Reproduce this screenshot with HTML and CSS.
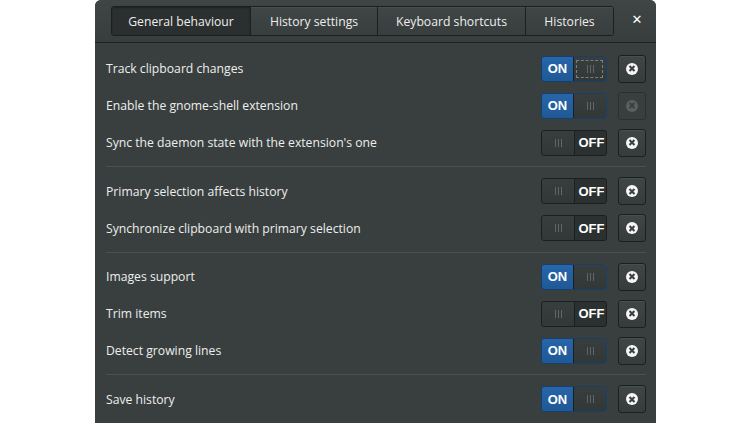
FILE: index.html
```html
<!DOCTYPE html>
<html>
<head>
<meta charset="utf-8">
<link rel="stylesheet" href="styles.css">
</head>
<body>
<div class="window">
  <div class="header">
    <div class="tabs">
      <div class="tab active">General behaviour</div>
      <div class="tab">History settings</div>
      <div class="tab">Keyboard shortcuts</div>
      <div class="tab">Histories</div>
    </div>
    <div class="close">&#x2715;</div>
  </div>
  <div class="content">
    <div class="row">
      <span class="label">Track clipboard changes</span>
      <div class="sw on focus"><span class="state">ON</span><span class="knob"><i></i><i></i><i></i></span></div>
      <div class="reset"><span class="ico"></span></div>
    </div>
    <div class="row">
      <span class="label">Enable the gnome-shell extension</span>
      <div class="sw on"><span class="state">ON</span><span class="knob"><i></i><i></i><i></i></span></div>
      <div class="reset disabled"><span class="ico"></span></div>
    </div>
    <div class="row">
      <span class="label">Sync the daemon state with the extension's one</span>
      <div class="sw off"><span class="knob"><i></i><i></i><i></i></span><span class="state">OFF</span></div>
      <div class="reset"><span class="ico"></span></div>
    </div>
    <div class="sep"></div>
    <div class="row">
      <span class="label">Primary selection affects history</span>
      <div class="sw off"><span class="knob"><i></i><i></i><i></i></span><span class="state">OFF</span></div>
      <div class="reset"><span class="ico"></span></div>
    </div>
    <div class="row">
      <span class="label">Synchronize clipboard with primary selection</span>
      <div class="sw off"><span class="knob"><i></i><i></i><i></i></span><span class="state">OFF</span></div>
      <div class="reset"><span class="ico"></span></div>
    </div>
    <div class="sep"></div>
    <div class="row">
      <span class="label">Images support</span>
      <div class="sw on"><span class="state">ON</span><span class="knob"><i></i><i></i><i></i></span></div>
      <div class="reset"><span class="ico"></span></div>
    </div>
    <div class="row">
      <span class="label">Trim items</span>
      <div class="sw off"><span class="knob"><i></i><i></i><i></i></span><span class="state">OFF</span></div>
      <div class="reset"><span class="ico"></span></div>
    </div>
    <div class="row">
      <span class="label">Detect growing lines</span>
      <div class="sw on"><span class="state">ON</span><span class="knob"><i></i><i></i><i></i></span></div>
      <div class="reset"><span class="ico"></span></div>
    </div>
    <div class="sep"></div>
    <div class="row">
      <span class="label">Save history</span>
      <div class="sw on"><span class="state">ON</span><span class="knob"><i></i><i></i><i></i></span></div>
      <div class="reset"><span class="ico"></span></div>
    </div>
  </div>
</div>
</body>
</html>
```
FILE: styles.css
```css
html, body {
  margin: 0;
  padding: 0;
  background: #ffffff;
  height: 100%;
  overflow: hidden;
}
body {
  display: flex;
  justify-content: flex-start;
  padding-left: 95px;
  font-family: "Open Sans", "Noto Sans", sans-serif;
  font-size: 12.2px;
  color: #eeeeec;
}
.window {
  width: 561px;
  height: 423px;
  background: #393f3f;
  border-radius: 6px 6px 0 0;
  overflow: hidden;
}
.header {
  height: 42px;
  border-bottom: 1px solid #1e2222;
  background: linear-gradient(#3f4545, #383d3d);
  display: flex;
  align-items: flex-start;
}
.tabs {
  margin-top: 6px;
  margin-left: 16px;
  height: 30px;
  display: flex;
  border: 1px solid #1c1f1f;
  border-radius: 3px;
  box-sizing: border-box;
  overflow: hidden;
}
.tab {
  display: flex;
  align-items: center;
  justify-content: center;
  background: linear-gradient(#404646, #383d3d);
  border-left: 1px solid #1c1f1f;
  box-shadow: inset 0 1px rgba(255,255,255,0.05);
}
.tab:nth-child(1) { width: 138px; border-left: 0; }
.tab:nth-child(2) { width: 126px; }
.tab:nth-child(3) { width: 147px; }
.tab:nth-child(4) { width: 87px; }
.tab.active {
  background: #2b2f2f;
  box-shadow: inset 0 1px 2px rgba(0,0,0,0.3);
}
.close {
  margin-left: 15px;
  margin-top: 12px;
  width: 16px;
  text-align: center;
  font-size: 13px;
  font-weight: bold;
  color: #ffffff;
  font-family: "DejaVu Sans", sans-serif;
}
.content {
  padding: 7px 10px 0 11px;
}
.row {
  height: 37px;
  display: flex;
  align-items: center;
}
.label {
  flex: 1;
}
.sep {
  height: 1px;
  background: #4a5050;
  margin: 5px 0 5.5px 0;
}
.sw {
  width: 66px;
  height: 26px;
  box-sizing: border-box;
  border-radius: 3px;
  display: flex;
  font-weight: bold;
  font-family: "Liberation Sans", "Open Sans", sans-serif;
  font-size: 13px;
  color: #ffffff;
  overflow: hidden;
}
.sw.on {
  background: linear-gradient(#2766aa, #1f5896);
  border: 1px solid #173f6b;
}
.sw.off {
  background: #2b3030;
  border: 1px solid #1c1f1f;
}
.state {
  flex: 1;
  display: flex;
  align-items: center;
  justify-content: center;
}
.sw.off .state { padding-left: 2px; }
.knob {
  width: 33px;
  display: flex;
  align-items: center;
  justify-content: center;
  gap: 2px;
  background: linear-gradient(#383d3d, #323737);
  box-sizing: border-box;
}
.sw.on .knob { border-left: 1px solid #1c1f1f; }
.sw.off .knob { border-right: 1px solid #1c1f1f; }
.knob i {
  width: 1px;
  height: 8px;
  background: #60666a;
}
.sw.focus .knob {
  outline: 1px dashed #7a8080;
  outline-offset: -4px;
}
.reset {
  margin-left: 11px;
  width: 28px;
  height: 28px;
  box-sizing: border-box;
  border: 1px solid #1c1f1f;
  border-radius: 3px;
  background: linear-gradient(#404646, #363b3b);
  box-shadow: inset 0 1px rgba(255,255,255,0.05);
  display: flex;
  align-items: center;
  justify-content: center;
}
.ico {
  width: 12px;
  height: 12px;
  border-radius: 50%;
  background: #f6f6f6;
  position: relative;
}
.ico::before, .ico::after {
  content: "";
  position: absolute;
  left: 5px;
  top: 2.5px;
  width: 2px;
  height: 7px;
  background: #3a3f3f;
  transform: rotate(45deg);
}
.ico::after { transform: rotate(-45deg); }
.reset.disabled {
  background: #393e3e;
  border-color: #2c3030;
  box-shadow: none;
}
.reset.disabled .ico { background: #5a5f5f; }
.reset.disabled .ico::before, .reset.disabled .ico::after { background: #3a3f3f; }
```
